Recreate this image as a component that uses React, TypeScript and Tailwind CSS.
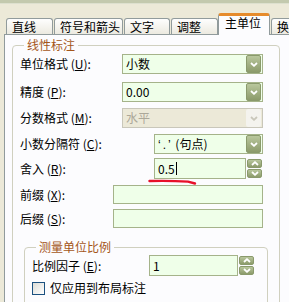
import React from "react";

const font = "font-['Noto_Sans_CJK_SC','Noto_Sans',sans-serif]";

const Chevron = ({ up = false, color = "#ffffff" }: { up?: boolean; color?: string }) => (
    <svg width="8" height="5" viewBox="0 0 8 5">
        <path d={up ? "M1 4 L4 1.2 L7 4" : "M1 1 L4 3.8 L7 1"} stroke={color} strokeWidth="1.8" fill="none" />
    </svg>
)

const DropBtn = ({ disabled = false }: { disabled?: boolean }) => (
    <div
        className={
            disabled
                ? "flex h-[18px] w-[15px] items-center justify-center rounded-[2px] bg-[#f4f3ee]"
                : "flex h-[18px] w-[15px] items-center justify-center rounded-[2px] border border-[#8a9a6c] bg-gradient-to-b from-[#b9c79d] to-[#8c9b6b]"
        }
    >
        <Chevron color={disabled ? "#c9c7ba" : "#ffffff"} />
    </div>
)

const Spinner = () => (
    <div className="ml-px flex flex-col gap-px">
        <div className="flex h-[9px] w-[15px] items-center justify-center rounded-[2px] border border-[#8a9a6c] bg-gradient-to-b from-[#b9c79d] to-[#8c9b6b]">
            <Chevron up />
        </div>
        <div className="flex h-[9px] w-[15px] items-center justify-center rounded-[2px] border border-[#8a9a6c] bg-gradient-to-b from-[#b9c79d] to-[#8c9b6b]">
            <Chevron />
        </div>
    </div>
)

const Combo = ({ text, className, disabled = false }: { text: React.ReactNode; className: string; disabled?: boolean }) => (
    <div
        className={`flex h-[20px] items-center justify-between border pl-[3px] pr-px ${className} ${
            disabled ? "border-[#c9c7ba] bg-[#ece9d8] text-[#aca899]" : "border-[#a5b38a] bg-[#efffe9] text-black"
        }`}
    >
        <span className="leading-none">{text}</span>
        <DropBtn disabled={disabled} />
    </div>
)

const Label = ({ text, k, className }: { text: string; k: string; className: string }) => (
    <div className={`shrink-0 text-black ${className}`}>
        {text} (<span className="underline">{k}</span>):
    </div>
)

const Tab = ({ label, className }: { label: string; className: string }) => (
    <div
        className={`h-[16px] rounded-t-[3px] border-x border-t border-[#919b9c] bg-gradient-to-b from-[#fefefe] to-[#eceae0] pl-[5px] text-[12px] leading-[15px] text-black ${className}`}
    >
        {label}
    </div>
)

export default function App() {
    return (
        <div className={`relative h-[302px] w-[289px] overflow-hidden bg-[#ece9d8] text-[12px] ${font}`}>
            <div className="h-[3px] bg-[#c3c9ae]" />
            <div className="h-px bg-[#dde0cf]" />

            {/* tabs */}
            <div className="mt-[10px] flex h-[20px] items-end whitespace-nowrap">
                <Tab label="直线" className="ml-[6px] w-[47px] shrink-0" />
                <Tab label="符号和箭头" className="ml-px w-[69px] shrink-0" />
                <Tab label="文字" className="ml-px w-[46px] shrink-0" />
                <Tab label="调整" className="ml-px w-[47px] shrink-0" />
                <div className="relative z-10 -mb-px h-[22px] w-[52px] shrink-0 rounded-t-[3px] border-x border-t-[3px] border-x-[#919b9c] border-t-[#e68b2c] bg-[#fcfcfe] pl-[6px] text-[12px] leading-[14px] text-black">
                    主单位
                </div>
                <Tab label="换算单位" className="ml-px w-[60px] shrink-0 pl-[3px]" />
            </div>

            {/* panel */}
            <div className="ml-[4px] h-[280px] w-[300px] border-l border-t border-[#919b9c] bg-[#fcfcfe] pl-[7px]">
                <fieldset className="mt-[3px] h-[300px] w-[268px] rounded-[4px] border border-[#d0d0bf] pl-[7px]">
                    <legend className="ml-[4px] px-[3px] text-[12px] leading-[14px] text-[#a4561a]">线性标注</legend>

                    <div className="mt-[2px] flex items-center">
                        <Label text="单位格式" k="U" className="w-[102px]" />
                        <Combo text="小数" className="w-[141px]" />
                    </div>
                    <div className="mt-[8px] flex items-center">
                        <Label text="精度" k="P" className="w-[102px]" />
                        <Combo text="0.00" className="w-[141px]" />
                    </div>
                    <div className="mt-[6px] flex items-center">
                        <Label text="分数格式" k="M" className="w-[102px]" />
                        <Combo text="水平" className="w-[141px]" disabled />
                    </div>
                    <div className="mt-[6px] flex items-center">
                        <Label text="小数分隔符" k="C" className="w-[134px]" />
                        <Combo
                            text={
                                <>
                                    <span className="font-['Liberation_Sans',sans-serif] tracking-[2px]">‘.’</span> (句点)
                                </>
                            }
                            className="w-[109px]"
                        />
                    </div>
                    <div className="mt-[4px] flex items-center">
                        <Label text="舍入" k="R" className="w-[134px]" />
                        <div className="flex h-[21px] w-[92px] items-center border border-[#a5b38a] bg-[#efffe9] pl-[3px]">
                            <span className="leading-none">0.5</span>
                            <span className="ml-px h-[13px] w-px bg-black" />
                        </div>
                        <Spinner />
                    </div>
                    <div className="mt-[6px] flex items-center">
                        <Label text="前缀" k="X" className="w-[93px]" />
                        <div className="h-[19px] w-[150px] border border-[#a5b38a] bg-[#efffe9]" />
                    </div>
                    <div className="mt-[5px] flex items-center">
                        <Label text="后缀" k="S" className="w-[93px]" />
                        <div className="h-[19px] w-[150px] border border-[#a5b38a] bg-[#efffe9]" />
                    </div>

                    <fieldset className="ml-[4px] mt-[12px] h-[100px] w-[244px] rounded-[4px] border border-[#d0d0bf] pl-[7px]">
                        <legend className="ml-[4px] px-[3px] text-[12px] leading-[14px] text-[#a4561a]">测量单位比例</legend>
                        <div className="mt-px flex items-center">
                            <Label text="比例因子" k="E" className="w-[117px]" />
                            <div className="flex h-[21px] w-[89px] items-center border border-[#a5b38a] bg-[#efffe9] pl-[3px]">
                                <span className="leading-none">1</span>
                            </div>
                            <Spinner />
                        </div>
                        <div className="mt-[3px] flex items-center">
                            <div className="h-[13px] w-[13px] border border-[#1c5180] bg-gradient-to-br from-[#dcdcd6] to-[#ffffff]" />
                            <span className="ml-[5px] text-black">仅应用到布局标注</span>
                        </div>
                    </fieldset>
                </fieldset>
            </div>

            {/* red hand-drawn mark */}
            <svg className="absolute left-[148px] top-[179px]" width="50" height="7" viewBox="0 0 50 7">
                <path d="M1.5 2 Q 22 1.5 40 2.6 L47 4.5" stroke="#e8102a" strokeWidth="2.4" fill="none" strokeLinecap="round" />
            </svg>
        </div>
    )
}
